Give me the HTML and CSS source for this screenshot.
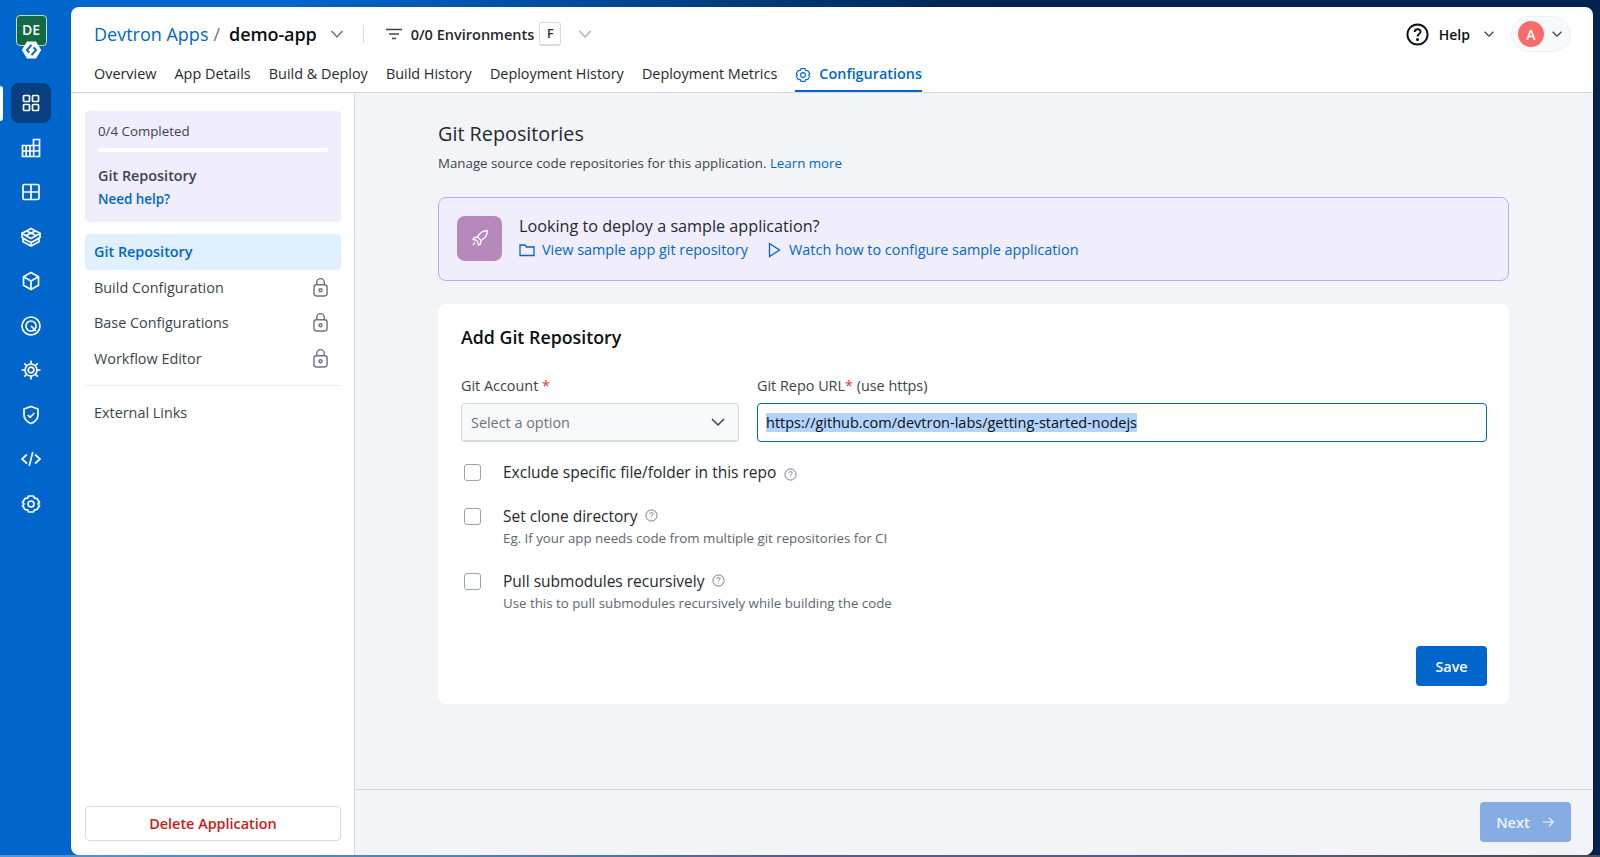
FILE: index.html
```html
<!DOCTYPE html>
<html lang="en">
<head>
  <meta charset="UTF-8">
  <title>Devtron Apps</title>
  <link rel="stylesheet" href="styles.css">
</head>
<body>
  <div class="rail">
    <div class="logo">
      <div class="logo-tile">DE</div>
      <svg class="logo-hex" viewBox="0 0 20 18"><path d="M5.500 .5h9L19.700 9l-5.200 8.500h-9L.3 9z" fill="#fff"/><path d="M10 3.800L5.400 9l2.400 2.700M10 14.200L14.600 9l-2.400-2.700" fill="none" stroke="#0066cc" stroke-width="2"/></svg>
    </div>
    <div class="rail-items">
      <div class="rail-item active"><svg viewBox="0 0 20 20"><rect x="2.500" y="2.500" width="6" height="6" rx=".8"/><rect x="11.500" y="2.500" width="6" height="6" rx=".8"/><rect x="2.500" y="11.500" width="6" height="6" rx=".8"/><rect x="11.500" y="11.500" width="6" height="6" rx=".8"/></svg></div>
      <div class="rail-item"><svg viewBox="0 0 20 20"><path d="M1.500 7.500h11V1.500h6v17h-17zM1.500 13h17M5.200 7.500v11M9 7.500v11M12.700 7.500v11M12.700 7.500h5.800"/></svg></div>
      <div class="rail-item"><svg viewBox="0 0 20 20"><rect x="2" y="2.500" width="16" height="15" rx="1.500"/><path d="M10 2.500v15M2 10h16"/></svg></div>
      <div class="rail-item"><svg viewBox="0 0 20 20"><path d="M10 1.500l4 2.200 5 2.600-4 2.400-5 2.800-5-2.800-4-2.400 5-2.600zM1 6.300v4.200l4 2.300M19 6.300v4.200l-4 2.300M2 11.500v3.200l8 4.300 8-4.300v-3.200L10 15.500zM10 15.500V19M5 3.700l10 4.900M15 3.700L5 8.600"/></svg></div>
      <div class="rail-item"><svg viewBox="0 0 20 20"><path d="M10 1.500l7.500 4.200v8.600L10 18.500l-7.500-4.200V5.700zM2.500 5.700L10 10l7.500-4.300M10 10v8.500"/></svg></div>
      <div class="rail-item"><svg viewBox="0 0 20 20"><circle cx="10" cy="10" r="9"/><circle cx="10" cy="10" r="5"/><path d="M10 10l5 5"/></svg></div>
      <div class="rail-item"><svg viewBox="0 0 20 20"><circle cx="10" cy="10" r="6"/><circle cx="10" cy="10" r="2.800"/><path d="M10 .5V4M10 16v3.500M.5 10H4M16 10h3.500M3.300 3.300l2.500 2.500M14.200 14.200l2.500 2.500M3.300 16.700l2.500-2.500M14.200 5.800l2.500-2.500"/></svg></div>
      <div class="rail-item"><svg viewBox="0 0 20 20"><path d="M10 1.500l7 2.500v6c0 4-3 6.800-7 8.500-4-1.700-7-4.500-7-8.500V4zM6.800 10l2.300 2.300 4.200-4.300"/></svg></div>
      <div class="rail-item"><svg viewBox="0 0 20 20"><path d="M6 5.500L1 10l5 4.500M14 5.500l5 4.500-5 4.500M11.800 3L8.200 17"/></svg></div>
      <div class="rail-item"><svg viewBox="0 0 20 20"><path d="M7.500 2h5l1 2.200 2.500.3 2.500 4-1.500 1.500 1.500 1.500-2.500 4-2.500.3-1 2.200h-5l-1-2.200-2.500-.3-2.500-4L3 10 1.500 8.500l2.500-4 2.500-.3z"/><circle cx="10" cy="10" r="3"/></svg></div>
    </div>
    <div class="rail-marker"></div>
  </div>

  <div class="panel">
    <div class="app-header">
      <div class="header-top">
        <a class="crumb-link">Devtron Apps</a>
        <span class="crumb-slash">/</span>
        <span class="crumb-app">demo-app</span>
        <svg class="chev chev-big" viewBox="0 0 16 16"><path d="M2.500 5l5.500 6 5.500-6"/></svg>
        <span class="header-sep"></span>
        <svg class="filter-icon" viewBox="0 0 16 12"><path d="M0 1.500h16M3 6h10M6 10.500h4"/></svg>
        <span class="env-label">0/0 Environments</span>
        <span class="key-box">F</span>
        <svg class="chev chev-light" viewBox="0 0 16 16"><path d="M2.500 5l5.500 6 5.500-6"/></svg>
        <span class="spacer"></span>
        <svg class="help-icon" viewBox="0 0 24 24"><circle cx="12" cy="12" r="10.500"/><path d="M9 9.500c0-4 6.200-4 6.200-.3 0 2.400-3.200 2.400-3.200 5"/><circle class="dot" cx="12" cy="17.300" r=".6"/></svg>
        <span class="help-label">Help</span>
        <svg class="chev chev-small" viewBox="0 0 16 16"><path d="M3 5.500l5 5 5-5"/></svg>
        <div class="user-pill">
          <span class="avatar">A</span>
          <svg class="chev chev-small" viewBox="0 0 16 16"><path d="M3 5.500l5 5 5-5"/></svg>
        </div>
      </div>
      <div class="tabs">
        <a class="tab">Overview</a>
        <a class="tab">App Details</a>
        <a class="tab">Build &amp; Deploy</a>
        <a class="tab">Build History</a>
        <a class="tab">Deployment History</a>
        <a class="tab">Deployment Metrics</a>
        <a class="tab tab-active"><svg class="tab-gear" viewBox="0 0 20 20"><path d="M7.500 2h5l1 2.200 2.500.3 2.500 4-1.500 1.500 1.500 1.500-2.500 4-2.500.3-1 2.200h-5l-1-2.200-2.500-.3-2.500-4L3 10 1.500 8.500l2.500-4 2.500-.3z"/><circle cx="10" cy="10" r="3"/></svg>Configurations</a>
      </div>
    </div>

    <div class="panel-body">
      <div class="sidebar">
        <div class="progress-card">
          <div class="progress-count">0/4 Completed</div>
          <div class="progress-bar"></div>
          <div class="progress-title">Git Repository</div>
          <a class="progress-help">Need help?</a>
        </div>
        <div class="menu-item menu-active">Git Repository</div>
        <div class="menu-item">Build Configuration <svg class="lock" viewBox="0 0 16 20"><rect x="1" y="7" width="14" height="12" rx="2.500"/><path d="M4 7V4.500a4 4 0 0 1 8 0V7"/><circle cx="8" cy="13" r="1.600"/></svg></div>
        <div class="menu-item">Base Configurations <svg class="lock" viewBox="0 0 16 20"><rect x="1" y="7" width="14" height="12" rx="2.500"/><path d="M4 7V4.500a4 4 0 0 1 8 0V7"/><circle cx="8" cy="13" r="1.600"/></svg></div>
        <div class="menu-item">Workflow Editor <svg class="lock" viewBox="0 0 16 20"><rect x="1" y="7" width="14" height="12" rx="2.500"/><path d="M4 7V4.500a4 4 0 0 1 8 0V7"/><circle cx="8" cy="13" r="1.600"/></svg></div>
        <div class="menu-divider"></div>
        <div class="menu-item">External Links</div>
        <div class="spacer"></div>
        <button class="delete-btn">Delete Application</button>
      </div>

      <div class="main">
        <div class="content">
          <h1 class="page-title">Git Repositories</h1>
          <p class="page-sub">Manage source code repositories for this application. <a class="link">Learn more</a></p>

          <div class="banner">
            <div class="banner-icon"><svg viewBox="0 0 20 20"><path d="M17.500 2.500c-4.500 0-7.500 2-10 6.500L11 12.500c4.500-2.500 6.500-5.500 6.500-10zM7.500 9L4 9.500 3 11.500l3 .5M11 12.500L10.500 16 8.500 17l-.5-3M6 12l2 2M5 14.500L3 17"/></svg></div>
            <div>
              <div class="banner-title">Looking to deploy a sample application?</div>
              <div class="banner-links">
                <a class="link banner-link"><svg viewBox="0 0 16 16"><path d="M1 13.500V3h5l1.500 2H15v8.500z"/></svg>View sample app git repository</a>
                <a class="link banner-link"><svg viewBox="0 0 16 16"><path d="M3.500 1.500l10 6.500-10 6.500z"/></svg>Watch how to configure sample application</a>
              </div>
            </div>
          </div>

          <div class="card">
            <h2 class="card-title">Add Git Repository</h2>
            <div class="fields">
              <div>
                <label class="field-label">Git Account <span class="req">*</span></label>
                <div class="select-box">Select a option <svg class="chev chev-select" viewBox="0 0 16 16"><path d="M2 5l6 6 6-6"/></svg></div>
              </div>
              <div>
                <label class="field-label">Git Repo URL<span class="req">*</span> (use https)</label>
                <div class="input-box"><span class="selected">https://github.com/devtron-labs/getting-started-nodejs</span></div>
              </div>
            </div>

            <div class="check-row check-first">
              <span class="checkbox"></span>
              <div class="check-text"><span class="check-label">Exclude specific file/folder in this repo</span><svg class="hint hint-low" viewBox="0 0 14 14"><circle cx="7" cy="7" r="6"/><path d="M5.300 5.500c0-2.200 3.500-2.200 3.500-.2 0 1.300-1.800 1.300-1.800 2.800M7 10v.4"/></svg></div>
            </div>
            <div class="check-row">
              <span class="checkbox"></span>
              <div class="check-text">
                <span class="check-label">Set clone directory</span><svg class="hint" viewBox="0 0 14 14"><circle cx="7" cy="7" r="6"/><path d="M5.300 5.500c0-2.200 3.500-2.200 3.500-.2 0 1.300-1.800 1.300-1.800 2.800M7 10v.4"/></svg>
                <div class="check-sub">Eg. If your app needs code from multiple git repositories for CI</div>
              </div>
            </div>
            <div class="check-row">
              <span class="checkbox"></span>
              <div class="check-text">
                <span class="check-label">Pull submodules recursively</span><svg class="hint" viewBox="0 0 14 14"><circle cx="7" cy="7" r="6"/><path d="M5.300 5.500c0-2.200 3.500-2.200 3.500-.2 0 1.300-1.800 1.300-1.800 2.800M7 10v.4"/></svg>
                <div class="check-sub">Use this to pull submodules recursively while building the code</div>
              </div>
            </div>

            <div class="card-actions"><button class="save-btn">Save</button></div>
          </div>
        </div>
        <div class="footer">
          <button class="next-btn">Next <svg viewBox="0 0 16 16"><path d="M2 8h12M9 3l5 5-5 5"/></svg></button>
        </div>
      </div>
    </div>
  </div>
  <div class="bottom-strip"></div>
</body>
</html>
```
FILE: styles.css
```css
* {
  box-sizing: border-box;
}
html, body {
  height: 100%;
}
body {
  margin: 0;
  display: flex;
  overflow: hidden;
  font-family: "Open Sans", "Noto Sans", sans-serif;
  font-size: 14.400px;
  color: #24292f;
  background: linear-gradient(90deg, #0066cc 0%, #0066cc 18%, #01234f 62%, #01234f 100%);
}
svg {
  fill: none;
  stroke: currentColor;
  flex-shrink: 0;
}
.spacer {
  flex: 1;
}
.bottom-strip {
  position: absolute;
  left: 0;
  right: 0;
  bottom: 0;
  height: 2px;
  background: linear-gradient(90deg, #4a94e0 0%, #4c80c0 30%, #5a5a98 50%, #555a78 80%, #4a4a50 100%);
}

/* left rail */
.rail {
  width: 71px;
  flex-shrink: 0;
  background-color: #0066cc;
  position: relative;
  padding-right: 9px;
  display: flex;
  flex-direction: column;
  align-items: center;
}
.logo {
  position: relative;
  width: 31px;
  height: 62px;
  margin-top: 15px;
}
.logo-tile {
  width: 31px;
  height: 31px;
  background-color: #116a41;
  border: 1px solid #c3d8cd;
  border-radius: 4px;
  color: #fff;
  font-size: 14px;
  font-weight: 600;
  text-align: center;
  line-height: 28px;
}
.logo-hex {
  position: absolute;
  left: 5px;
  top: 26px;
  width: 21px;
  height: 18px;
  stroke: none;
}
.rail-items {
  display: flex;
  flex-direction: column;
  align-items: center;
  margin-top: 4px;
}
.rail-item {
  width: 40px;
  height: 44.500px;
  display: flex;
  align-items: center;
  justify-content: center;
  color: #fff;
}
.rail-item svg {
  width: 20px;
  height: 20px;
  stroke-width: 1.700;
}
.rail-item.active {
  position: relative;
}
.rail-item.active::before {
  content: "";
  position: absolute;
  left: 0;
  top: 2px;
  width: 40px;
  height: 40px;
  background-color: #083f80;
  border-radius: 8px;
}
.rail-item.active svg {
  position: relative;
}
.rail-marker {
  position: absolute;
  left: 0;
  top: 86px;
  width: 3px;
  height: 35px;
  background-color: #fff;
  border-radius: 0 3px 3px 0;
}

/* panel */
.panel {
  flex: 1;
  min-width: 0;
  margin: 7px 7px 2px 0;
  background-color: #fff;
  border-radius: 8px;
  overflow: hidden;
  display: flex;
  flex-direction: column;
}
.app-header {
  height: 86px;
  flex-shrink: 0;
  padding: 0 22px 0 23px;
  border-bottom: 1px solid #d6dbdf;
  box-shadow: 0 1px 1px rgba(0, 0, 0, 0.05);
}
.header-top {
  height: 54px;
  display: flex;
  align-items: center;
}
.crumb-link {
  font-size: 18px;
  color: #0066cc;
}
.crumb-slash {
  font-size: 18px;
  color: #6b7480;
  margin-left: 5px;
}
.crumb-app {
  font-size: 18px;
  font-weight: 600;
  color: #0b0f14;
  margin-left: 9px;
  letter-spacing: -0.100px;
}
.chev {
  stroke-width: 1.500;
}
.chev-big {
  width: 16px;
  height: 16px;
  color: #6b7480;
  margin-left: 12px;
}
.header-sep {
  width: 1px;
  height: 18px;
  background-color: #d6dbdf;
  margin: 0 22px 0 18px;
}
.filter-icon {
  width: 16px;
  height: 12px;
  color: #3b444c;
  stroke-width: 1.500;
}
.env-label {
  font-weight: 600;
  margin-left: 9px;
  font-size: 14.500px;
}
.key-box {
  width: 22px;
  height: 24px;
  border: 1px solid #d6dbdf;
  border-bottom-width: 2px;
  border-radius: 3px;
  font-size: 12.500px;
  font-weight: 600;
  display: flex;
  align-items: center;
  justify-content: center;
  margin-left: 5px;
}
.chev-light {
  width: 16px;
  height: 16px;
  color: #aab2ba;
  margin-left: 16px;
}
.help-icon {
  width: 23px;
  height: 23px;
  color: #0b0f14;
  stroke-width: 2;
}
.help-icon .dot {
  fill: currentColor;
}
.help-label {
  font-weight: 600;
  margin-left: 10px;
  color: #0b0f14;
  font-size: 14px;
}
.chev-small {
  width: 14px;
  height: 14px;
  color: #3b444c;
}
.help-label + .chev-small {
  margin-left: 12px;
}
.user-pill {
  width: 60px;
  height: 36px;
  margin-left: 15px;
  padding-left: 6px;
  border: 1px solid #eef0f2;
  background-color: #f8f9fb;
  border-radius: 18px;
  display: flex;
  align-items: center;
  gap: 6px;
}
.avatar {
  width: 26px;
  height: 26px;
  border-radius: 50%;
  background-color: #f76b6b;
  color: #fff;
  font-size: 14px;
  font-weight: 600;
  display: flex;
  align-items: center;
  justify-content: center;
}
.tabs {
  display: flex;
  gap: 18.100px;
  height: 31px;
}
.tab {
  color: #24292f;
  padding-top: 3px;
  white-space: nowrap;
}
.tab-active {
  color: #0066cc;
  font-weight: 600;
  border-bottom: 2px solid #0066cc;
  display: flex;
  gap: 8px;
  height: 31px;
}
.tab-gear {
  width: 16px;
  height: 16px;
  margin-top: 3px;
  stroke-width: 1.400;
}
.panel-body {
  flex: 1;
  min-height: 0;
  display: flex;
}

/* sidebar */
.sidebar {
  width: 284px;
  flex-shrink: 0;
  padding: 18px 13px 14px 14px;
  border-right: 1px solid #d6dbdf;
  display: flex;
  flex-direction: column;
}
.progress-card {
  height: 111px;
  background-color: #f0eefd;
  border-radius: 4px;
  padding: 11px 13px;
  margin-bottom: 12px;
}
.progress-count {
  font-size: 13.300px;
  color: #3b444c;
  line-height: 18px;
}
.progress-bar {
  height: 4px;
  background-color: #fff;
  margin-top: 8px;
}
.progress-title {
  font-weight: 600;
  color: #3b444c;
  margin-top: 14px;
  line-height: 19px;
}
.progress-help {
  display: block;
  font-size: 13.400px;
  font-weight: 600;
  color: #0066cc;
  line-height: 20px;
  margin-top: 4px;
}
.menu-item {
  height: 35.500px;
  flex-shrink: 0;
  padding: 0 11px 0 9px;
  display: flex;
  align-items: center;
  justify-content: space-between;
  color: #3b444c;
  border-radius: 4px;
}
.menu-active {
  background-color: #e1f0ff;
  color: #0066cc;
  font-weight: 600;
}
.lock {
  width: 15px;
  height: 19px;
  color: #6b7480;
  stroke-width: 1.500;
  margin-right: 2px;
}
.menu-divider {
  height: 1px;
  background-color: #eceff2;
  margin: 9px 0 9px;
  flex-shrink: 0;
}
.delete-btn {
  height: 35px;
  background-color: #fff;
  border: 1px solid #d6dbdf;
  border-radius: 4px;
  color: #c91a1a;
  font-family: inherit;
  font-size: 14.400px;
  font-weight: 600;
}

/* main */
.main {
  flex: 1;
  min-width: 0;
  display: flex;
  flex-direction: column;
  background-color: #f2f4f7;
}
.content {
  flex: 1;
  padding: 29px 84px 0 83px;
}
.page-title {
  font-size: 19.800px;
  font-weight: 500;
  line-height: 24px;
  margin: 0;
  color: #24292f;
}
.page-sub {
  font-size: 13.300px;
  line-height: 18px;
  margin: 8px 0 0;
  color: #3b444c;
}
.link {
  color: #0066cc;
}
.banner {
  height: 84px;
  margin-top: 25px;
  padding: 0 18px 2px;
  display: flex;
  align-items: center;
  gap: 17px;
  background-color: #f0eefd;
  border: 1px solid #b5aee8;
  border-radius: 8px;
}
.banner-icon {
  width: 45px;
  height: 45px;
  border-radius: 8px;
  background-color: #b688bc;
  display: flex;
  align-items: center;
  justify-content: center;
  color: #fff;
}
.banner-icon svg {
  width: 20px;
  height: 20px;
  stroke-width: 1.300;
}
.banner-title {
  font-size: 16.200px;
  font-weight: 500;
  color: #24292f;
  line-height: 20px;
}
.banner-links {
  display: flex;
  gap: 18px;
  margin-top: 4px;
}
.banner-link {
  line-height: 20px;
  display: flex;
  align-items: center;
  gap: 7px;
}
.banner-link svg {
  width: 16px;
  height: 16px;
  stroke-width: 1.300;
}
.card {
  height: 400px;
  margin-top: 23px;
  padding: 22px 22px 0 23px;
  background-color: #fff;
  border-radius: 8px;
}
.card-title {
  font-size: 17.800px;
  font-weight: 600;
  line-height: 22px;
  margin: 0;
  color: #0b0f14;
}
.fields {
  display: grid;
  grid-template-columns: 278px 1fr;
  gap: 18px;
  margin-top: 28px;
}
.field-label {
  display: block;
  line-height: 20px;
  color: #3b444c;
  margin-bottom: 7px;
}
.req {
  color: #f32e2e;
}
.select-box {
  height: 39px;
  padding: 0 9px;
  border: 1px solid #d6dbdf;
  border-bottom-width: 2px;
  background-color: #f8f9fb;
  border-radius: 4px;
  color: #6b7480;
  display: flex;
  align-items: center;
  justify-content: space-between;
}
.chev-select {
  width: 16px;
  height: 16px;
  color: #3b444c;
  margin-right: 3px;
}
.input-box {
  height: 39px;
  padding: 0 8px;
  border: 1px solid #0066cc;
  border-radius: 4px;
  background-color: #fff;
  display: flex;
  align-items: center;
  color: #0b0f14;
  font-size: 14.500px;
}
.selected {
  background-color: #b3d4fc;
  line-height: 19px;
}
.check-row {
  display: flex;
  margin-top: 24px;
  padding-left: 3px;
}
.check-first {
  margin-top: 20px;
}
.checkbox {
  width: 17px;
  height: 17px;
  flex-shrink: 0;
  margin-top: 2px;
  border: 1.500px solid #9aa3ab;
  border-radius: 3px;
  background-color: #fff;
}
.check-text {
  margin-left: 22px;
}
.check-label {
  font-size: 15.500px;
  line-height: 20px;
  color: #24292f;
}
.check-sub {
  font-size: 13.300px;
  line-height: 18px;
  color: #5c6670;
  margin-top: 3px;
}
.hint {
  width: 13px;
  height: 13px;
  color: #6b7480;
  margin-left: 8px;
  stroke-width: 1;
}
.hint-low {
  position: relative;
  top: 3px;
}
.card-actions {
  display: flex;
  justify-content: flex-end;
  margin-top: 34px;
}
.save-btn {
  width: 71px;
  height: 40px;
  border: none;
  border-radius: 4px;
  background-color: #0066cc;
  color: #fff;
  font-family: inherit;
  font-size: 14.400px;
  font-weight: 600;
}
.footer {
  height: 66px;
  flex-shrink: 0;
  border-top: 1px solid #d6dbdf;
  padding: 12px 22px 0 0;
  display: flex;
  justify-content: flex-end;
}
.next-btn {
  width: 91px;
  height: 40px;
  border: none;
  border-radius: 4px;
  background-color: #85ade3;
  color: #eef4fc;
  font-family: inherit;
  font-size: 14.600px;
  font-weight: 600;
  display: flex;
  align-items: center;
  justify-content: center;
  gap: 11px;
}
.next-btn svg {
  width: 14px;
  height: 14px;
  stroke-width: 1.400;
}
```
